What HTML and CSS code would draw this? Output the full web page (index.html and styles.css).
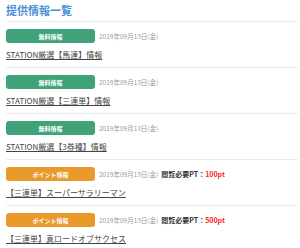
FILE: index.html
```html
<!DOCTYPE html>
<html lang="ja">
<head>
    <meta charset="UTF-8">
    <title>提供情報一覧</title>
    <link rel="stylesheet" href="styles.css">
</head>
<body>

<div class="page">
    <h1 class="page-title">提供情報一覧</h1>

    <ul class="info-list">
        <li class="info-item">
            <div class="meta">
                <span class="badge free">無料情報</span>
                <span class="date">2019年09月13日(金)</span>
            </div>
            <a class="info-title" href="#">STATION厳選【馬連】情報</a>
        </li>
        <li class="info-item">
            <div class="meta">
                <span class="badge free">無料情報</span>
                <span class="date">2019年09月13日(金)</span>
            </div>
            <a class="info-title" href="#">STATION厳選【三連単】情報</a>
        </li>
        <li class="info-item">
            <div class="meta">
                <span class="badge free">無料情報</span>
                <span class="date">2019年09月13日(金)</span>
            </div>
            <a class="info-title" href="#">STATION厳選【3券種】情報</a>
        </li>
        <li class="info-item">
            <div class="meta">
                <span class="badge point">ポイント情報</span>
                <span class="date">2019年09月13日(金)</span>
                <span class="need">閲覧必要PT：<em>100pt</em></span>
            </div>
            <a class="info-title" href="#">【三連単】スーパーサラリーマン</a>
        </li>
        <li class="info-item">
            <div class="meta">
                <span class="badge point">ポイント情報</span>
                <span class="date">2019年09月13日(金)</span>
                <span class="need">閲覧必要PT：<em>500pt</em></span>
            </div>
            <a class="info-title" href="#">【三連単】真ロードオブサクセス</a>
        </li>
    </ul>
</div>

</body>
</html>
```

FILE: styles.css
```css
body {
    margin: 0;
    background: #fff;
    font-family: "Noto Sans CJK JP", "Noto Sans", sans-serif;
    color: #333;
}

.page {
    padding: 0 2px 0 6px;
}

.page-title {
    margin: 0;
    font-size: 11px;
    line-height: 21px;
    font-weight: bold;
    color: #4a90d9;
    border-bottom: 1px solid #ececec;
}

.info-list {
    list-style: none;
    margin: 0;
    padding: 0;
}

.info-item {
    padding: 7px 0 6px;
    border-bottom: 1px solid #ececec;
}

.meta {
    display: flex;
    align-items: center;
    height: 14px;
    margin-bottom: 6px;
}

.badge {
    width: 89px;
    height: 14px;
    border-radius: 3px;
    display: flex;
    align-items: center;
    justify-content: center;
    color: #fff;
    font-size: 6px;
    font-weight: bold;
}

.badge.free {
    background: #3fa279;
}

.badge.point {
    background: #e89a2a;
}

.date {
    margin-left: 4px;
    font-size: 6.5px;
    color: #999;
}

.need {
    margin-left: 3px;
    font-size: 7px;
    font-weight: bold;
    color: #333;
}

.need em {
    font-style: normal;
    color: #ff2222;
}

.info-title {
    display: block;
    font-size: 8px;
    line-height: 12px;
    color: #444;
    text-decoration: underline;
}
```
